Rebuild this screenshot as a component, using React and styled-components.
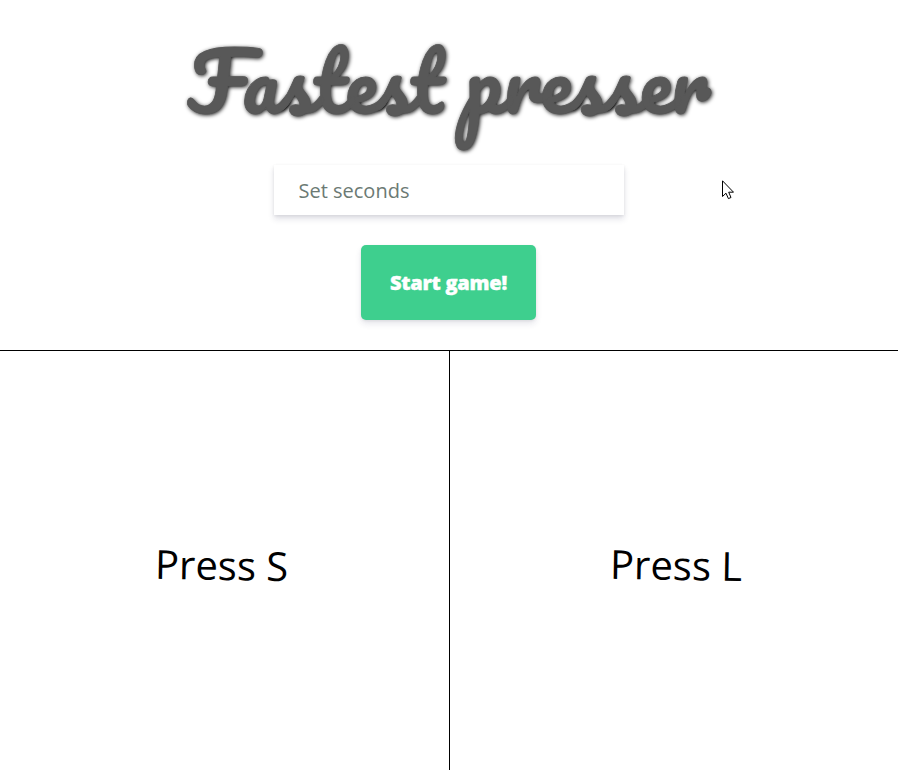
import React from "react";
import styled, { createGlobalStyle } from "styled-components";

const GlobalStyle = createGlobalStyle`
  *, *::before, *::after { box-sizing: border-box; }
  body {
    margin: 0;
    background: #fff;
    font-family: "Open Sans", sans-serif;
    overflow: hidden;
  }
`;

const Page = styled.main`
  position: relative;
  display: flex;
  flex-direction: column;
  height: 770px;
`;

const Controls = styled.header`
  display: flex;
  flex-direction: column;
  align-items: center;
  height: 350px;
`;

const Title = styled.h1`
  margin: 0;
  height: 165px;
  line-height: 161px;
  white-space: nowrap;
  font-family: "Pacifico", cursive;
  font-size: 80px;
  font-weight: 400;
  color: #585858;
  -webkit-text-stroke: 0.8px #585858;
  text-shadow: 1px 1px 4px #000;
`;

const SecondsInput = styled.input`
  width: 350px;
  height: 50px;
  margin: 0 0 30px;
  padding: 0 24.5px;
  border: 0;
  outline: 0;
  background: #fff;
  font: 400 20px "Open Sans", sans-serif;
  box-shadow: 0 4px 6px rgba(50, 50, 93, 0.14), 0 1px 3px rgba(0, 0, 0, 0.08);
  &::placeholder { color: #6c7a74; opacity: 1; }
`;

const StartButton = styled.button`
  width: 175px;
  height: 75px;
  margin-right: 1px;
  padding: 0;
  border: 0;
  border-radius: 5px;
  background: #3ecf8e;
  color: #fff;
  font: 800 20px "Open Sans", sans-serif;
  letter-spacing: -0.25px;
  -webkit-text-stroke: 0.4px #fff;
  box-shadow: 0 4px 6px rgba(50, 50, 93, 0.11), 0 1px 3px rgba(0, 0, 0, 0.08);
`;

const Arena = styled.section`
  display: grid;
  grid-template-columns: 450px 1fr;
  flex: 1;
  border-top: 1px solid #000;
`;

const Player = styled.div`
  display: flex;
  align-items: center;
  justify-content: center;
  padding-top: 8px;
  border-right: ${(p) => (p.$divided ? "1px solid #000" : "0")};
`;

const Prompt = styled.span`
  font-size: 40px;
  line-height: 54px;
  color: #000;
  margin-left: ${(p) => p.$shift}px;
  transform: rotate(1deg);
`;

const Pointer = styled.svg`
  position: absolute;
  left: 722px;
  top: 180px;
  width: 12px;
  height: 20px;
`;

export default function App() {
  return (
    <>
      <GlobalStyle />
      <Page>
        <Controls>
          <Title>Fastest presser</Title>
          <SecondsInput placeholder="Set seconds" />
          <StartButton>Start game!</StartButton>
        </Controls>
        <Arena>
          <Player $divided>
            <Prompt $shift={-6}>Press S</Prompt>
          </Player>
          <Player>
            <Prompt $shift={4}>Press L</Prompt>
          </Player>
        </Arena>
        <Pointer viewBox="0 0 12 20" aria-hidden="true">
          <path
            d="M.5 .8V16.5L4 13.2L6.4 18.6L9 17.5L6.7 12.2H11.5Z"
            fill="#fff"
            stroke="#000"
            strokeWidth="1"
          />
        </Pointer>
      </Page>
    </>
  );
}
